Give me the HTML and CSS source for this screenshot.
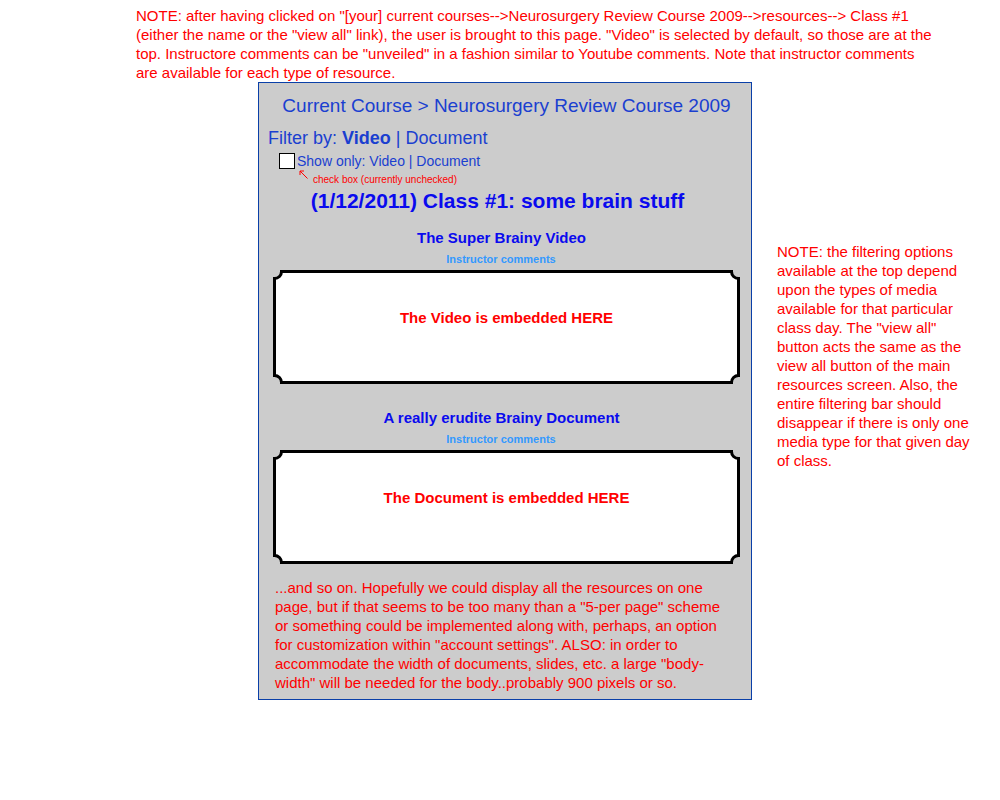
FILE: index.html
```html
<!DOCTYPE html>
<html>
<head>
<meta charset="utf-8">
<link rel="stylesheet" href="styles.css">
</head>
<body>
<div class="top-note">NOTE: after having clicked on "[your] current courses--&gt;Neurosurgery Review Course 2009--&gt;resources--&gt; Class #1<br>(either the name or the "view all" link), the user is brought to this page. "Video" is selected by default, so those are at the<br>top. Instructore comments can be "unveiled" in a fashion similar to Youtube comments. Note that instructor comments<br>are available for each type of resource.</div>
<div class="row">
  <div class="panel">
    <div class="crumb">Current Course &gt; Neurosurgery Review Course 2009</div>
    <div class="filter">Filter by: <b>Video</b> | Document</div>
    <div class="show-only"><span class="check"></span><span>Show only: Video | Document</span></div>
    <div class="annot">
      <svg class="arrow" width="10" height="10" viewBox="0 0 10 10"><path d="M8.5 8.5 L1 1 M1 1 H5 M1 1 V5" fill="none" stroke="#ff0000" stroke-width="1"/></svg>
      <span class="annot-text">check box (currently unchecked)</span>
    </div>
    <div class="class-title">(1/12/2011) Class #1: some brain stuff</div>

    <div class="res-title">The Super Brainy Video</div>
    <div class="comments">Instructor comments</div>
    <div class="embed">
      <svg class="frame" width="467" height="114" viewBox="0 0 467 114"><path d="M8.5 1.5 H458.5 A7 7 0 0 0 465.5 8.5 V105.5 A7 7 0 0 0 458.5 112.5 H8.5 A7 7 0 0 0 1.5 105.5 V8.5 A7 7 0 0 0 8.5 1.5 Z" fill="#fff" stroke="#000" stroke-width="3"/></svg>
      <span class="embed-text">The Video is embedded HERE</span>
    </div>

    <div class="res-title second">A really erudite Brainy Document</div>
    <div class="comments">Instructor comments</div>
    <div class="embed">
      <svg class="frame" width="467" height="114" viewBox="0 0 467 114"><path d="M8.5 1.5 H458.5 A7 7 0 0 0 465.5 8.5 V105.5 A7 7 0 0 0 458.5 112.5 H8.5 A7 7 0 0 0 1.5 105.5 V8.5 A7 7 0 0 0 8.5 1.5 Z" fill="#fff" stroke="#000" stroke-width="3"/></svg>
      <span class="embed-text">The Document is embedded HERE</span>
    </div>

    <div class="bottom-note">...and so on. Hopefully we could display all the resources on one<br>page, but if that seems to be too many than a "5-per page" scheme<br>or something could be implemented along with, perhaps, an option<br>for customization within "account settings". ALSO: in order to<br>accommodate the width of documents, slides, etc. a large "body-<br>width" will be needed for the body..probably 900 pixels or so.</div>
  </div>
  <div class="side-note">NOTE: the filtering options<br>available at the top depend<br>upon the types of media<br>available for that particular<br>class day. The "view all"<br>button acts the same as the<br>view all button of the main<br>resources screen. Also, the<br>entire filtering bar should<br>disappear if there is only one<br>media type for that given day<br>of class.</div>
</div>
</body>
</html>
```
FILE: styles.css
```css
html, body {
  margin: 0;
  padding: 0;
  background: #fff;
  font-family: "Liberation Sans", Arial, sans-serif;
}
.top-note {
  padding: 6px 0 0 136px;
  font-size: 15px;
  line-height: 19px;
  color: #ff0000;
  white-space: nowrap;
}
.row {
  display: flex;
  align-items: flex-start;
  margin-left: 258px;
}
.panel {
  width: 492px;
  border: 1px solid #0a3fa8;
  background: #cccccc;
  padding-bottom: 7px;
}
.crumb {
  margin-top: 12px;
  font-size: 19px;
  line-height: 22px;
  color: #1a3fd0;
  text-align: center;
  padding-left: 3px;
}
.filter {
  margin-top: 10px;
  padding-left: 9px;
  font-size: 18px;
  line-height: 22px;
  color: #1a3fd0;
}
.filter b { font-weight: bold; }
.show-only {
  display: flex;
  align-items: center;
  margin-top: 4px;
  margin-left: 20px;
  height: 16px;
  font-size: 14px;
  color: #1a3fd0;
}
.check {
  width: 14px;
  height: 14px;
  border: 1px solid #000;
  background: #fff;
  margin-right: 2px;
}
.annot {
  display: flex;
  align-items: flex-start;
  margin-left: 40px;
  height: 18px;
  color: #ff0000;
}
.arrow {
  margin-top: 1px;
  margin-right: 4px;
  flex: none;
}
.annot-text {
  margin-top: 5px;
  font-size: 10px;
  line-height: 12px;
}
.class-title {
  margin-top: 2px;
  font-size: 21px;
  line-height: 24px;
  font-weight: bold;
  color: #0a0aee;
  text-align: center;
  padding-right: 15px;
}
.res-title {
  margin-top: 16px;
  font-size: 15px;
  line-height: 18px;
  font-weight: bold;
  color: #0a0aee;
  text-align: center;
  padding-right: 7px;
}
.res-title.second { margin-top: 25px; }
.comments {
  margin-top: 6px;
  font-size: 11px;
  line-height: 12px;
  font-weight: bold;
  color: #3399ff;
  text-align: center;
  padding-right: 8px;
}
.embed {
  position: relative;
  width: 467px;
  height: 114px;
  margin: 5px 0 0 14px;
  text-align: center;
}
.frame {
  position: absolute;
  left: 0;
  top: 0;
}
.embed-text {
  position: relative;
  display: block;
  padding-top: 39px;
  font-size: 15px;
  line-height: 18px;
  font-weight: bold;
  color: #ff0000;
}
.bottom-note {
  margin-top: 14px;
  padding-left: 16px;
  font-size: 15px;
  line-height: 19px;
  color: #ff0000;
  white-space: nowrap;
}
.side-note {
  margin-top: 160px;
  margin-left: 25px;
  font-size: 15px;
  line-height: 19px;
  color: #ff0000;
  white-space: nowrap;
}
```
